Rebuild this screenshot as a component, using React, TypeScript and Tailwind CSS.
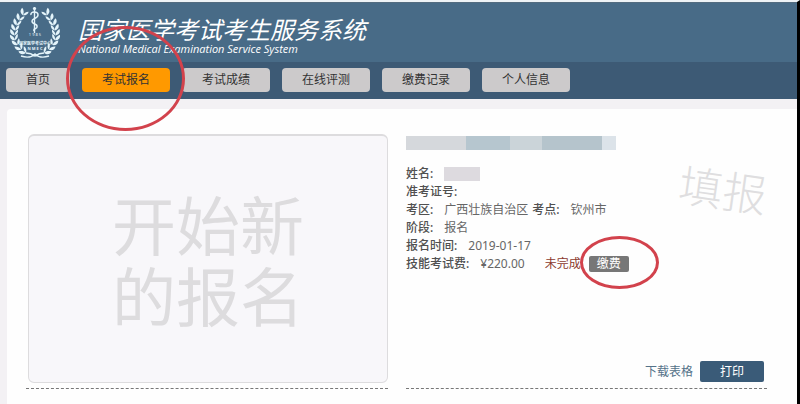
import React from "react";

const nav = ["首页", "考试报名", "考试成绩", "在线评测", "缴费记录", "个人信息"];

const leaves = [
  { x: 16, y: 6, r: 28 },
  { x: 12, y: 11, r: 22 },
  { x: 9, y: 16, r: 14 },
  { x: 7, y: 21, r: 6 },
  { x: 6, y: 26, r: 0 },
  { x: 6, y: 31, r: -10 },
  { x: 8, y: 36, r: -20 },
  { x: 11, y: 41, r: -34 },
  { x: 15, y: 45, r: -48 },
];

function Branch() {
  return (
    <g>
      {leaves.map((l) => (
        <g key={l.y} transform={`translate(${l.x} ${l.y}) rotate(${l.r})`}>
          <path d="M0.5 3.5C-3.5 2.5-4.5 0-3.5-3C-1-1.5 0.5 0.5 0.5 3.5Z" />
          <path d="M0.5 3.5C0.5 1 1.5-1 4-2.5C4.5 0.5 3 2.5 0.5 3.5Z" />
        </g>
      ))}
    </g>
  );
}

function Logo() {
  return (
    <svg viewBox="0 0 54 54" className="h-[54px] w-[54px] shrink-0 text-[#e4f4fa]" fill="currentColor" role="img" aria-label="国家医学考试中心">
      <Branch />
      <g transform="translate(54 0) scale(-1 1)">
        <Branch />
      </g>
      <path d="M13 50Q22 53 27 48Q32 53 41 50M18 47Q23 47 27 50Q31 47 36 47" fill="none" stroke="currentColor" strokeWidth="1.4" />
      <path d="M26.500 1V27" stroke="currentColor" strokeWidth="1.4" />
      <circle cx="26.500" cy="2.500" r="1.600" />
      <path d="M23 9C22 5 30 5 30 9C30 13 24 12 24 15C24 19 30 17 29 21C29 23 25 22 26 25" fill="none" stroke="currentColor" strokeWidth="1.5" />
      <text x="27" y="30" textAnchor="middle" fontSize="4" fontFamily="Noto Sans">1 9 8 5</text>
      <text x="27" y="39" textAnchor="middle" fontSize="4" fontWeight="700" fontFamily="Noto Sans CJK SC">国家医学考试中心</text>
      <text x="27" y="44" textAnchor="middle" fontSize="4" fontWeight="700" fontFamily="Noto Sans">N M E C</text>
    </svg>
  );
}

function Field({ label, children }: { label: string; children?: React.ReactNode }) {
  return (
    <div className="flex gap-[11px]">
      <dt className="font-medium text-[#505050]">{label}:</dt>
      <dd className="flex items-center">{children}</dd>
    </div>
  );
}

export default function App() {
  return (
    <div className="min-h-screen border-r-[3px] border-t-2 border-r-black border-t-[#eef3f6] bg-[#f3f1f4] font-['Noto_Sans','Noto_Sans_CJK_SC',sans-serif] text-xs text-[#666]">
      <header className="flex h-[60px] items-start gap-4 border-t border-[#536c80] bg-[#486b87] px-2 pt-[3px]">
        <Logo />
        <div className="pt-3 text-white">
          <h1 className="text-2xl leading-6 italic">国家医学考试考生服务系统</h1>
          <p className="font-['Open_Sans','Noto_Sans',sans-serif] text-[11px] leading-[14px] font-medium italic">National Medical Examination Service System</p>
        </div>
      </header>
      <nav className="flex gap-3 bg-[#3d5a75] px-1.5 pt-1.5 pb-[7px]">
        {nav.map((name, i) => (
          <div key={name} className="relative">
            <button
              type="button"
              className={`block h-6 rounded text-xs text-[#333] ${i === 0 ? "w-16" : "w-[88px]"} ${i === 1 ? "bg-[#ff9900]" : "bg-[#cccacb]"}`}
            >
              {name}
            </button>
            {i === 1 && (
              <span className="pointer-events-none absolute -top-[42px] -left-4 z-10 h-[105px] w-[119px] rounded-[50%] border-[3px] border-[#d2424c]" />
            )}
          </div>
        ))}
      </nav>
      <main className="mt-2.5 ml-[7px] flex gap-[18px] rounded-tl bg-[#fefefe] pt-[25px] pr-[30px] pb-4 pl-[19px]">
        <section className="flex-1 border-b border-dashed border-[#777] pb-[5px]">
          <button
            type="button"
            className="ml-0.5 flex h-[249px] w-[360px] items-center justify-center rounded-md border border-t-2 border-[#dddcde] bg-[#f8f7fa] pt-1 text-[64px] leading-[71px] text-[#dddcde]"
          >
            <span>
              开始新
              <br />
              的报名
            </span>
          </button>
        </section>
        <section className="relative flex flex-1 flex-col border-b border-dashed border-[#777] pb-1.5">
          <div className="mt-0.5 flex h-[14px] w-[210px]">
            <span className="w-[60px] bg-[#d5d8dc]" />
            <span className="w-11 bg-[#b6c6cf]" />
            <span className="w-8 bg-[#cbd4d9]" />
            <span className="w-[60px] bg-[#b5c4cc]" />
            <span className="flex-1 bg-[#dce3e9]" />
          </div>
          <dl className="mt-[15px] leading-[18px]">
            <Field label="姓名">
              <span className="h-[14px] w-9 bg-[#dddadf]" />
            </Field>
            <Field label="准考证号" />
            <div className="flex gap-1">
              <Field label="考区">广西壮族自治区</Field>
              <Field label="考点">钦州市</Field>
            </div>
            <Field label="阶段">报名</Field>
            <Field label="报名时间">2019-01-17</Field>
            <Field label="技能考试费">
              <span>¥220.00</span>
              <span className="ml-5 text-[#8c3a2e]">未完成</span>
              <span className="relative ml-2">
                <button type="button" className="block h-4 w-10 rounded-xs bg-[#777] leading-4 text-white">缴费</button>
                <span className="pointer-events-none absolute -top-5 -left-[9px] h-[53px] w-[79px] rounded-[50%] border-[3px] border-[#d2424c]" />
              </span>
            </Field>
          </dl>
          <div className="pointer-events-none absolute top-7 right-0 rotate-[8deg] text-[44px] leading-[56px] font-light text-[#dfdee0]">填报</div>
          <div className="mt-auto flex items-center justify-end gap-[7px] pr-[3px]">
            <a href="#" className="text-[#557289]">下载表格</a>
            <button type="button" className="h-[21px] w-16 rounded-xs bg-[#3a5b78] text-white">打印</button>
          </div>
        </section>
      </main>
    </div>
  );
}
